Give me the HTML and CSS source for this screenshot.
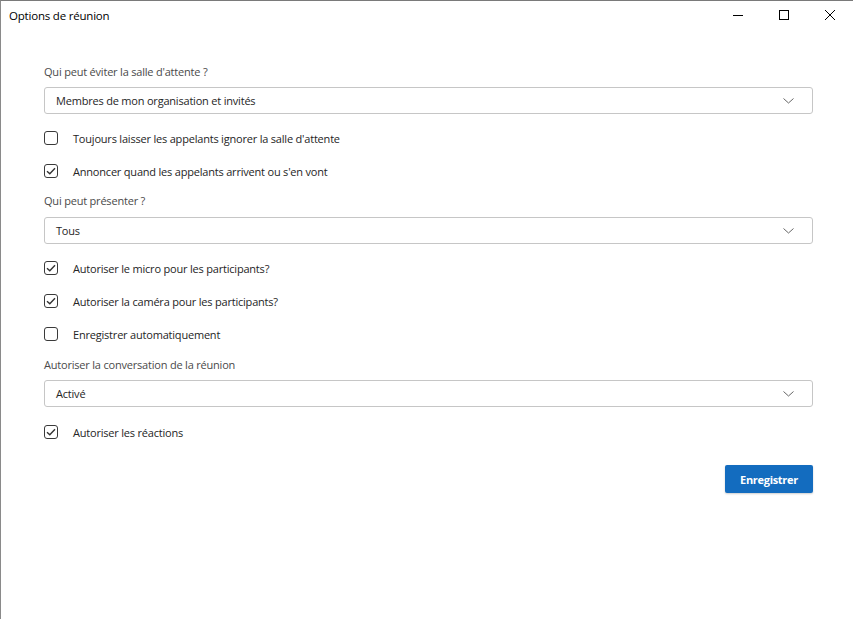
FILE: index.html
```html
<!DOCTYPE html>
<html lang="fr">
<head>
<meta charset="utf-8">
<title>Options de réunion</title>
<link rel="stylesheet" href="styles.css">
</head>
<body>
<div class="window">
  <div class="titlebar">
    <div class="title">Options de réunion</div>
    <div class="controls">
      <div class="ctl"><svg width="10" height="10" viewBox="0 0 10 10"><path d="M0 5.5H10" stroke="#000" stroke-width="1"/></svg></div>
      <div class="ctl"><svg width="10" height="10" viewBox="0 0 10 10"><rect x="0.5" y="0.5" width="9" height="9" fill="none" stroke="#000" stroke-width="1"/></svg></div>
      <div class="ctl"><svg width="10" height="10" viewBox="0 0 10 10"><path d="M0 0L10 10M10 0L0 10" stroke="#000" stroke-width="1"/></svg></div>
    </div>
  </div>
  <div class="content">
    <div class="label first">Qui peut éviter la salle d'attente ?</div>
    <div class="select s7"><span>Membres de mon organisation et invités</span><svg class="chev" width="11" height="6" viewBox="0 0 11 6"><path d="M0.5 0.5L5.5 5L10.5 0.5" fill="none" stroke="#666" stroke-width="1"/></svg></div>
    <div class="row m14"><span class="box"></span><span>Toujours laisser les appelants ignorer la salle d'attente</span></div>
    <div class="row m13"><span class="box"><svg width="10" height="8" viewBox="0 0 10 8"><path d="M1 4.2L3.8 6.8L9 1.2" fill="none" stroke="#333" stroke-width="1.4"/></svg></span><span>Annoncer quand les appelants arrivent ou s'en vont</span></div>
    <div class="label m12">Qui peut présenter ?</div>
    <div class="select s8"><span>Tous</span><svg class="chev" width="11" height="6" viewBox="0 0 11 6"><path d="M0.5 0.5L5.5 5L10.5 0.5" fill="none" stroke="#666" stroke-width="1"/></svg></div>
    <div class="row m14"><span class="box"><svg width="10" height="8" viewBox="0 0 10 8"><path d="M1 4.2L3.8 6.8L9 1.2" fill="none" stroke="#333" stroke-width="1.4"/></svg></span><span>Autoriser le micro pour les participants?</span></div>
    <div class="row m13"><span class="box"><svg width="10" height="8" viewBox="0 0 10 8"><path d="M1 4.2L3.8 6.8L9 1.2" fill="none" stroke="#333" stroke-width="1.4"/></svg></span><span>Autoriser la caméra pour les participants?</span></div>
    <div class="row m13"><span class="box"></span><span>Enregistrer automatiquement</span></div>
    <div class="label m13">Autoriser la conversation de la réunion</div>
    <div class="select s7"><span>Activé</span><svg class="chev" width="11" height="6" viewBox="0 0 11 6"><path d="M0.5 0.5L5.5 5L10.5 0.5" fill="none" stroke="#666" stroke-width="1"/></svg></div>
    <div class="row m15"><span class="box"><svg width="10" height="8" viewBox="0 0 10 8"><path d="M1 4.2L3.8 6.8L9 1.2" fill="none" stroke="#333" stroke-width="1.4"/></svg></span><span>Autoriser les réactions</span></div>
    <div class="actions"><button class="btn">Enregistrer</button></div>
  </div>
</div>
</body>
</html>
```
FILE: styles.css
```css
html, body {
  margin: 0;
  padding: 0;
  background: #fff;
}
body {
  width: 853px;
  height: 619px;
  overflow: hidden;
  font-family: "Open Sans", "Noto Sans", "Liberation Sans", sans-serif;
}
.window {
  box-sizing: border-box;
  width: 853px;
  height: 619px;
  border-top: 1px solid #7a7a7a;
  border-left: 1px solid #8a8a8a;
  display: flex;
  flex-direction: column;
}
.titlebar {
  height: 31px;
  display: flex;
  align-items: center;
  justify-content: space-between;
}
.title {
  padding-left: 8px;
  font-size: 11.5px;
  letter-spacing: -0.2px;
  color: #000;
  line-height: 16px;
  padding-bottom: 2px;
}
.controls {
  display: flex;
  height: 31px;
}
.ctl {
  width: 46px;
  display: flex;
  align-items: center;
  justify-content: center;
  padding-bottom: 3px;
}
.content {
  padding: 0 40px 0 43px;
  display: flex;
  flex-direction: column;
  font-size: 11px;
  letter-spacing: -0.2px;
  color: #252525;
}
.label {
  height: 16px;
  line-height: 16px;
  color: #4a4a4a;
}
.label.first { margin-top: 32px; }
.select {
  box-sizing: border-box;
  height: 27px;
  border: 1px solid #c6c6c6;
  border-radius: 3px;
  display: flex;
  align-items: center;
  justify-content: space-between;
  padding: 0 18px 0 11px;
  color: #252525;
}
.s7 { margin-top: 7px; }
.s8 { margin-top: 8px; }
.row {
  height: 20px;
  display: flex;
  align-items: center;
  gap: 15px;
}
.m12 { margin-top: 12px; }
.m13 { margin-top: 13px; }
.m14 { margin-top: 14px; }
.m15 { margin-top: 15px; }
.box {
  box-sizing: border-box;
  width: 14px;
  height: 14px;
  border: 1.3px solid #3a3a3a;
  border-radius: 3px;
  display: flex;
  align-items: center;
  justify-content: center;
}
.actions {
  margin-top: 23px;
  display: flex;
  justify-content: flex-end;
}
.btn {
  width: 88px;
  height: 28px;
  border: none;
  border-radius: 2px;
  background: #136cbf;
  color: #fff;
  font-family: "Open Sans", "Noto Sans", "Liberation Sans", sans-serif;
  font-weight: 700;
  font-size: 11px;
  letter-spacing: -0.3px;
  padding: 0;
  box-shadow: 0 1px 2px rgba(0,0,0,0.2);
}
```
